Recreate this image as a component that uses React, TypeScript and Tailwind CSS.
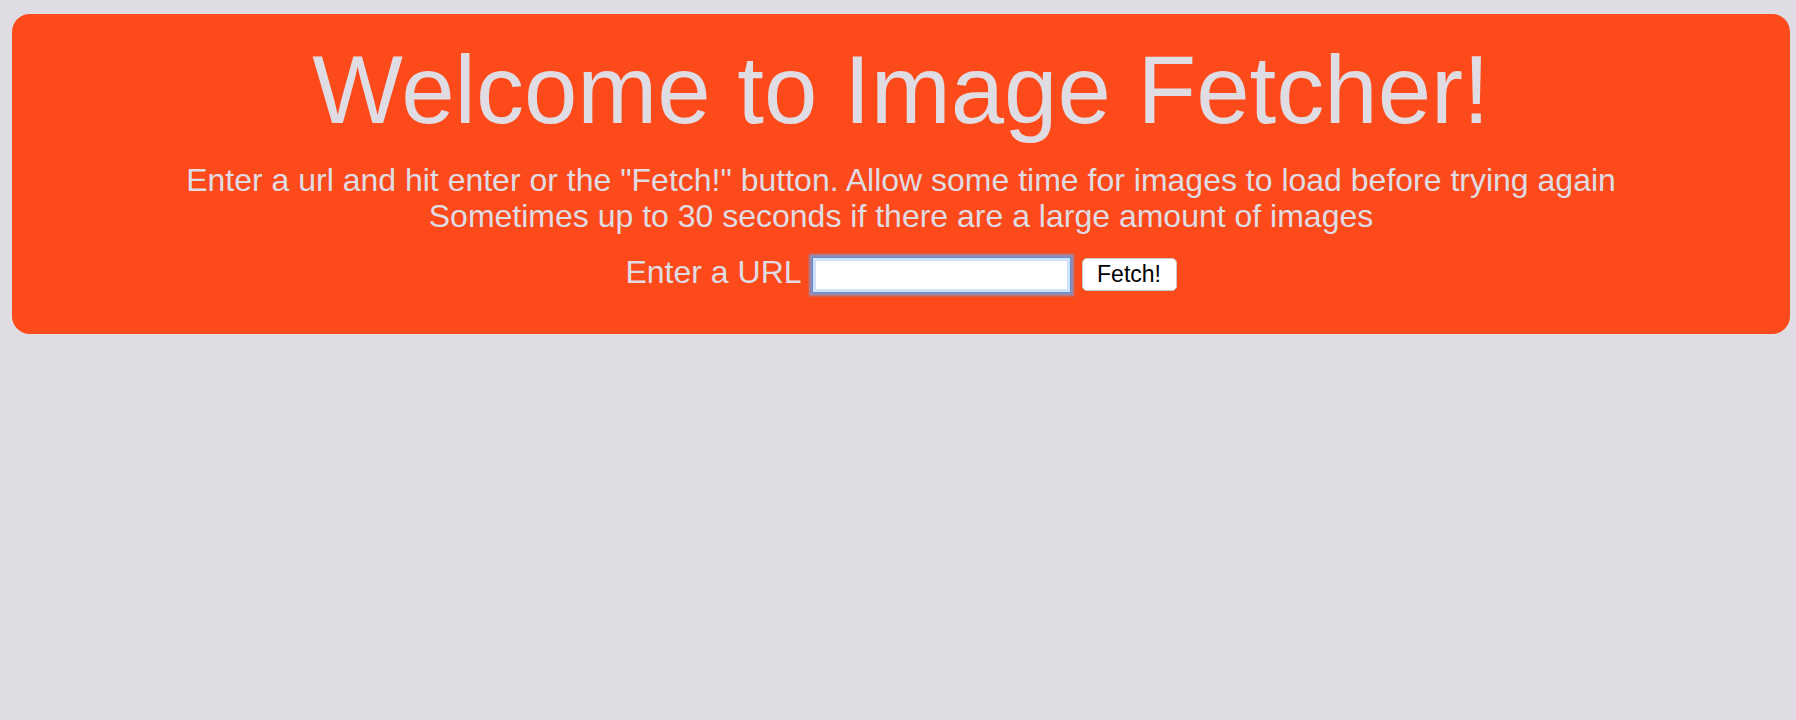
import React from "react";

export default function App() {
  return (
    <div
      className="min-h-[720px] w-full bg-[#dfdce3] pt-[14px] pl-[12px] pr-[6px]"
      style={{ fontFamily: '"Liberation Sans", Arial, Helvetica, sans-serif' }}
    >
      <div className="flex flex-col items-center rounded-[18px] bg-[#fc4a1a] pt-[21px] pb-[40px] text-[#dfdce3]">
        <h1 className="text-[96px] leading-[110px] font-normal whitespace-nowrap">
          Welcome to Image Fetcher!
        </h1>
        <div className="mt-[17px] text-center text-[32px] leading-[36px] whitespace-nowrap">
          <div>
            Enter a url and hit enter or the "Fetch!" button. Allow some time for images to load before trying again
          </div>
          <div>Sometimes up to 30 seconds if there are a large amount of images</div>
        </div>
        <div className="mt-[20px] flex h-[40px] items-start">
          <label className="text-[32px] leading-[36px] whitespace-nowrap">Enter a URL</label>
          <input
            type="text"
            className="ml-[10px] mt-[3px] h-[36px] w-[259px] border border-[#5b8fd8] bg-white px-[4px] text-[20px] text-black outline-none shadow-[0_0_2px_3px_rgba(118,160,226,0.75),inset_0_0_0_3px_#cfe2fa]"
          />
          <button className="ml-[11px] mt-[4px] flex h-[33px] w-[95px] items-center justify-center rounded-[5px] border border-[#c9c9c9] bg-white text-[23px] leading-none text-black">
            Fetch!
          </button>
        </div>
      </div>
    </div>
  );
}
